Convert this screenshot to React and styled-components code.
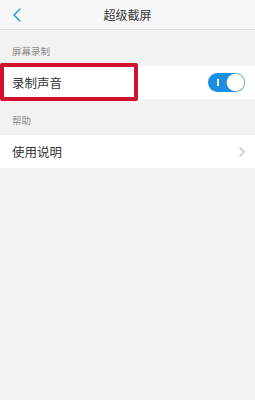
import React, { useState } from 'react';
import styled, { createGlobalStyle } from 'styled-components';

const GlobalStyle = createGlobalStyle`
  html, body {
    margin: 0;
    padding: 0;
    background: #f2f2f2;
  }
  body {
    font-family: "Noto Sans CJK SC", "Noto Sans", sans-serif;
  }
`;

const App = () => {
  const [sound, setSound] = useState(true);

  return (
    <Page>
      <GlobalStyle />
      <Header>
        <BackButton aria-label="back">
          <svg width="10" height="14" viewBox="0 0 10 14">
            <path d="M8 1 L2 7 L8 13" fill="none" stroke="#2a9de6" strokeWidth="1.6" strokeLinecap="round" strokeLinejoin="round" />
          </svg>
        </BackButton>
        <Title>超级截屏</Title>
        <span />
      </Header>

      <SectionLabel>屏幕录制</SectionLabel>
      <Row>
        <RowText>录制声音</RowText>
        <Toggle $on={sound} onClick={() => setSound(!sound)}>
          <ToggleMark />
          <Knob $on={sound} />
        </Toggle>
        <Highlight />
      </Row>

      <SectionLabel>帮助</SectionLabel>
      <Row>
        <RowText>使用说明</RowText>
        <svg width="6" height="10" viewBox="0 0 6 10">
          <path d="M1 1 L5 5 L1 9" fill="none" stroke="#bdbdbd" strokeWidth="1.2" strokeLinecap="round" strokeLinejoin="round" />
        </svg>
      </Row>
    </Page>
  );
};

const Page = styled.div`
  min-height: 400px;
  background: #f2f2f2;
`;

const Header = styled.div`
  height: 29px;
  display: grid;
  grid-template-columns: 40px 1fr 40px;
  align-items: center;
  background: #f7f7f7;
  border-bottom: 1px solid #dedede;
`;

const BackButton = styled.div`
  display: flex;
  align-items: center;
  padding-left: 12px;
`;

const Title = styled.div`
  text-align: center;
  font-size: 12px;
  color: #333;
`;

const SectionLabel = styled.div`
  height: 36px;
  display: flex;
  align-items: flex-end;
  padding: 0 12px 8px;
  box-sizing: border-box;
  font-size: 9.5px;
  color: #8a8a8a;
`;

const Row = styled.div`
  position: relative;
  height: 33px;
  display: flex;
  align-items: center;
  justify-content: space-between;
  padding: 0 10px 0 12px;
  background: #fff;
`;

const RowText = styled.div`
  font-size: 12.5px;
  color: #333;
`;

const Toggle = styled.div`
  position: relative;
  width: 37px;
  height: 19px;
  border-radius: 10px;
  background: ${(p) => (p.$on ? '#1a8fe3' : '#ddd')};
  cursor: pointer;
`;

const ToggleMark = styled.div`
  position: absolute;
  left: 9px;
  top: 6px;
  width: 1.5px;
  height: 7px;
  background: #fff;
`;

const Knob = styled.div`
  position: absolute;
  top: 1px;
  left: ${(p) => (p.$on ? '19px' : '1px')};
  width: 17px;
  height: 17px;
  border-radius: 50%;
  background: #fff;
  box-shadow: 0 0 0 0.5px #cfcfcf;
`;

const Highlight = styled.div`
  position: absolute;
  left: 0;
  top: -3px;
  width: 138px;
  height: 38px;
  box-sizing: border-box;
  border: 4px solid #d2102f;
  border-radius: 2px;
  pointer-events: none;
`;

export default App;
